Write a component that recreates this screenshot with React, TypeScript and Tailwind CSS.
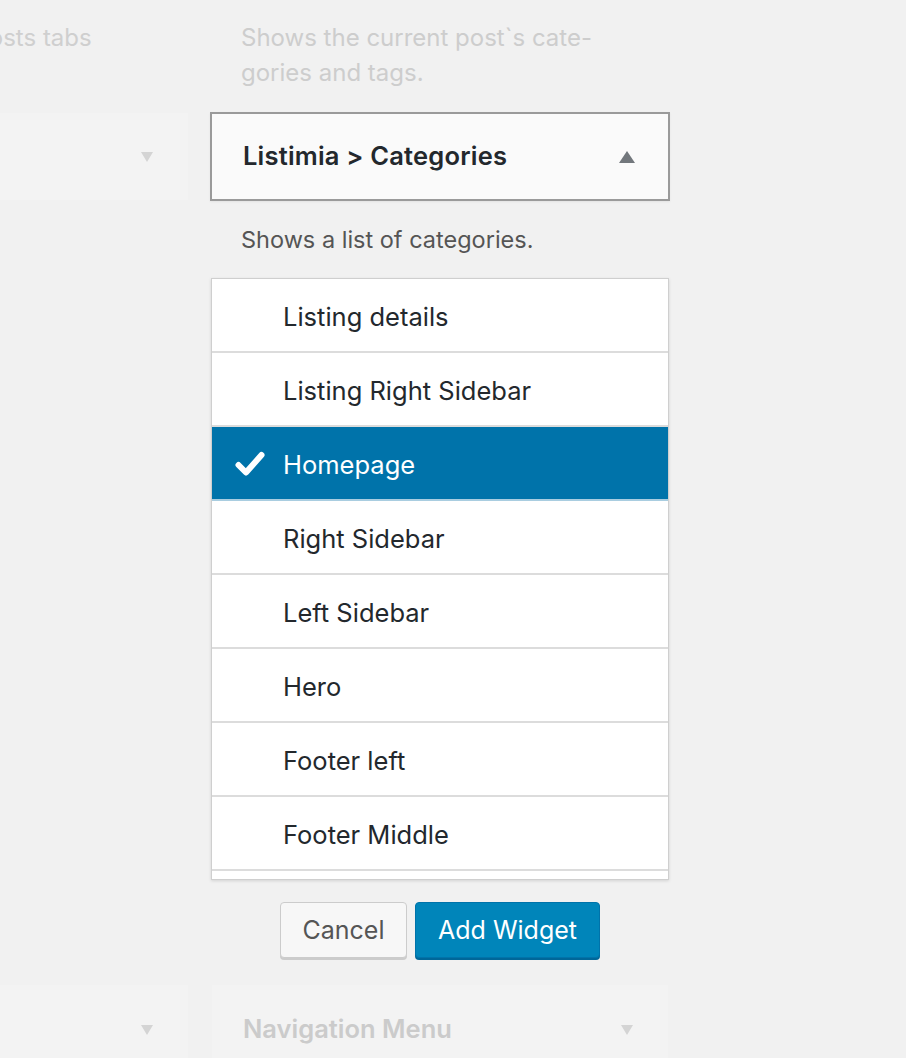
import React from "react";

const items = [
  "Listing details",
  "Listing Right Sidebar",
  "Homepage",
  "Right Sidebar",
  "Left Sidebar",
  "Hero",
  "Footer left",
  "Footer Middle",
];

function TriDown({ color }: { color: string }) {
  return (
    <svg width="12" height="10" viewBox="0 0 12 10">
      <path d="M0 0 L12 0 L6 10 Z" fill={color} />
    </svg>
  );
}

function TriUp({ color }: { color: string }) {
  return (
    <svg width="16" height="12" viewBox="0 0 16 12">
      <path d="M8 0 L16 12 L0 12 Z" fill={color} />
    </svg>
  );
}

export default function App() {
  return (
    <div
      className="w-[906px] h-[1058px] overflow-hidden bg-[#f1f1f1] flex flex-col"
      style={{ fontFamily: "Inter, 'Liberation Sans', sans-serif" }}
    >
      <div className="h-[985px] shrink-0 flex gap-[22px]">
        {/* Left faded column */}
        <div className="w-[188px] shrink-0 overflow-hidden flex flex-col">
          <div className="ml-[-270px] w-[458px] pt-[20px] text-[24px] leading-[35px] text-[#cfcfcf] pl-[30px] h-[113px]">
            <div className="whitespace-nowrap">Shows the current posts tabs</div>
          </div>
          <div className="h-[87px] bg-[#f3f3f3] flex items-center justify-end pr-[35px]">
            <TriDown color="#d4d4d4" />
          </div>
        </div>

        {/* Right column */}
        <div className="w-[460px] shrink-0 flex flex-col">
          <div className="pt-[20px] pl-[31px] text-[24px] leading-[35px] text-[#cdcdcd] h-[112px]">
            <div>Shows the current post`s cate-</div>
            <div>gories and tags.</div>
          </div>

          <div className="h-[89px] border-2 border-[#9a9a9a] bg-[#fafafa] flex items-center justify-between pl-[31px] pr-[33px] shadow-[0_1px_2px_rgba(0,0,0,0.06)]">
            <span className="text-[25.5px] font-semibold text-[#23282d] tracking-[0.2px]">
              Listimia &gt; Categories
            </span>
            <TriUp color="#72777c" />
          </div>

          <div className="pt-[23px] pb-[23px] pl-[31px] text-[23.5px] leading-[31px] text-[#555]">
            Shows a list of categories.
          </div>

          <div className="mx-[1px] h-[602px] bg-white border border-[#cfcfcf] shadow-[0_1px_3px_rgba(0,0,0,0.13)] overflow-hidden flex flex-col">
            {items.map((it) => {
              const sel = it === "Homepage";
              return (
                <div
                  key={it}
                  className={
                    "h-[74px] shrink-0 flex items-center border-b-2 " +
                    (sel
                      ? "bg-[#0073aa] border-[#a9cde0] text-white"
                      : "bg-white border-[#dcdcdc] text-[#23282d]")
                  }
                >
                  <div className="w-[71px] flex justify-center pl-[4px] pt-[2px]">
                    {sel && (
                      <svg width="30" height="26" viewBox="0 0 30 26">
                        <path
                          d="M3.5 14 L11 21.5 L26.5 4"
                          fill="none"
                          stroke="white"
                          strokeWidth="6"
                          strokeLinecap="round"
                          strokeLinejoin="round"
                        />
                      </svg>
                    )}
                  </div>
                  <span className="text-[25.5px] leading-none pt-[4px]">{it}</span>
                </div>
              );
            })}
          </div>

          <div className="flex justify-center gap-[8px] pt-[22px]">
            <button className="w-[127px] h-[56px] rounded-[4px] bg-[#f7f7f7] border border-[#cccccc] shadow-[0_2px_0_#ccc] text-[25px] text-[#555] pt-[2px]">
              Cancel
            </button>
            <button className="w-[185px] h-[56px] rounded-[4px] bg-[#0085ba] border border-[#0073aa] shadow-[0_2px_0_#006799] text-[25px] text-white pt-[2px]">
              Add Widget
            </button>
          </div>
        </div>
      </div>

      {/* Bottom faded row */}
      <div className="h-[89px] shrink-0 flex gap-[22px]">
        <div className="w-[188px] shrink-0 bg-[#f3f3f3] flex items-center justify-end pr-[35px]">
          <TriDown color="#d4d4d4" />
        </div>
        <div className="w-[460px] shrink-0 px-[2px]">
          <div className="h-full bg-[#f3f3f3] flex items-center justify-between pl-[31px] pr-[35px]">
            <span className="text-[25.5px] font-semibold text-[#cbcbcb]">Navigation Menu</span>
            <TriDown color="#d4d4d4" />
          </div>
        </div>
      </div>
    </div>
  );
}
